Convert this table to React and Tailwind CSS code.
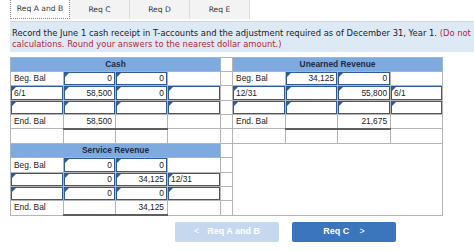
const cashRows = [
  [{ t: 'Beg. Bal', k: 'label' }, { t: '0', k: 'input' }, { t: '0', k: 'input' }, { k: 'plain' }],
  [{ t: '6/1', k: 'input', left: true }, { t: '58,500', k: 'input' }, { t: '0', k: 'input' }, { k: 'input' }],
  [{ k: 'input' }, { k: 'input' }, { k: 'input' }, { k: 'input' }],
  [{ t: 'End. Bal', k: 'label' }, { t: '58,500', k: 'total' }, { k: 'total' }, { k: 'plain' }],
]

const unearnedRows = [
  [{ t: 'Beg. Bal', k: 'label' }, { t: '34,125', k: 'input' }, { t: '0', k: 'input' }, { k: 'plain' }],
  [{ t: '12/31', k: 'input', left: true }, { k: 'input' }, { t: '55,800', k: 'input' }, { t: '6/1', k: 'input', left: true }],
  [{ k: 'input' }, { k: 'input' }, { k: 'input' }, { k: 'input' }],
  [{ t: 'End. Bal', k: 'label' }, { k: 'total' }, { t: '21,675', k: 'total' }, { k: 'plain' }],
]

const serviceRows = [
  [{ t: 'Beg. Bal', k: 'label' }, { t: '0', k: 'input' }, { t: '0', k: 'input' }, { k: 'plain' }],
  [{ k: 'input' }, { t: '0', k: 'input' }, { t: '34,125', k: 'input' }, { t: '12/31', k: 'input', left: true }],
  [{ k: 'input' }, { t: '0', k: 'input' }, { t: '0', k: 'input' }, { k: 'input' }],
  [{ t: 'End. Bal', k: 'label' }, { k: 'total' }, { t: '34,125', k: 'total' }, { k: 'plain' }],
]

function Cell({ c }) {
  if (c.k === 'input') {
    return (
      <td className="border border-[#b4b4b4] p-0">
        <div
          className={`relative h-[13.2px] border border-[#2f5b99] px-[2px] flex items-center text-[#222] ${
            c.left ? 'justify-start' : 'justify-end'
          }`}
        >
          <span className="absolute left-0 top-0 h-0 w-0 border-t-[4px] border-r-[4px] border-t-[#2f5b99] border-r-transparent" />
          {c.t}
        </div>
      </td>
    )
  }
  const total = c.k === 'total'
  return (
    <td
      className={`border border-[#b4b4b4] p-0 ${total ? 'border-b-2 border-b-[#5e5e5e]' : ''}`}
    >
      <div
        className={`h-[13.2px] px-[3px] flex items-center text-[#222] ${
          c.k === 'label' ? 'justify-start' : 'justify-end'
        }`}
      >
        {c.t}
      </div>
    </td>
  )
}

function Gap() {
  return (
    <td className="border border-[#b4b4b4] p-0">
      <div className="h-[13.2px]" />
    </td>
  )
}

function Head({ children }) {
  return (
    <th colSpan={4} className="border border-[#9fb6d2] bg-[#7eaae0] p-0">
      <div className="h-[13.2px] flex items-center justify-center font-bold text-[#1d2c48]">
        {children}
      </div>
    </th>
  )
}

export default function App() {
  return (
    <div className="w-[474px] h-[251px] overflow-hidden bg-white pl-[10px]">
      {/* tabs */}
      <div className="flex h-[19px] font-['DejaVu_Sans',Verdana,sans-serif] text-[7.6px] text-[#333]">
        <div className="w-[60px] flex items-center justify-center bg-white border-x border-b border-dotted border-[#8a8a8a]">
          Req A and B
        </div>
        {['Req C', 'Req D', 'Req E'].map((t) => (
          <div
            key={t}
            className="w-[60px] flex items-center justify-center bg-[#f3f3f3] border-r border-[#dcdcdc]"
          >
            {t}
          </div>
        ))}
      </div>

      {/* instructions */}
      <div className="mt-[2px] h-[31px] bg-[#dde9f5] border-t border-[#cbd9e8] pt-[6px] pl-[2px] whitespace-nowrap font-['DejaVu_Sans',Verdana,sans-serif] text-[8.4px] leading-[11px] text-[#222]">
        <div>
          Record the June 1 cash receipt in T-accounts and the adjustment required as of December 31, Year 1.{' '}
          <span className="text-[#b3283a]">(Do not</span>
        </div>
        <div className="text-[#b3283a]">calculations. Round your answers to the nearest dollar amount.)</div>
      </div>

      {/* t-accounts */}
      <table className="mt-[5px] w-[432px] table-fixed border-collapse border border-[#a9a9a9] font-['Liberation_Sans',Arial,sans-serif] text-[8.4px]">
        <colgroup>
          <col className="w-[53px]" />
          <col className="w-[52px]" />
          <col className="w-[52px]" />
          <col className="w-[53px]" />
          <col className="w-[12px]" />
          <col className="w-[53px]" />
          <col className="w-[52px]" />
          <col className="w-[53px]" />
          <col className="w-[52px]" />
        </colgroup>
        <tbody>
          <tr>
            <Head>Cash</Head>
            <Gap />
            <Head>Unearned Revenue</Head>
          </tr>
          {cashRows.map((row, i) => (
            <tr key={i}>
              {row.map((c, j) => (
                <Cell key={j} c={c} />
              ))}
              <Gap />
              {unearnedRows[i].map((c, j) => (
                <Cell key={j} c={c} />
              ))}
            </tr>
          ))}
          <tr>
            {Array.from({ length: 9 }).map((_, j) => (
              <Gap key={j} />
            ))}
          </tr>
          <tr>
            <Head>Service Revenue</Head>
            <Gap />
            <td colSpan={4} rowSpan={5} className="border border-[#b4b4b4] p-0" />
          </tr>
          {serviceRows.map((row, i) => (
            <tr key={i}>
              {row.map((c, j) => (
                <Cell key={j} c={c} />
              ))}
              <Gap />
            </tr>
          ))}
        </tbody>
      </table>

      {/* navigation */}
      <div className="mt-[6px] ml-[165px] flex gap-[13px] font-['Liberation_Sans',Arial,sans-serif] text-[9px] font-bold text-white">
        <button className="w-[104px] h-[20px] rounded-[2px] bg-[#c6d8ee] flex items-center justify-center gap-[8px]">
          <span className="font-normal">&lt;</span>
          <span>Req A and B</span>
        </button>
        <button className="w-[104px] h-[20px] rounded-[2px] bg-[#3b75bb] flex items-center justify-center gap-[10px]">
          <span>Req C</span>
          <span className="font-normal">&gt;</span>
        </button>
      </div>
    </div>
  )
}
